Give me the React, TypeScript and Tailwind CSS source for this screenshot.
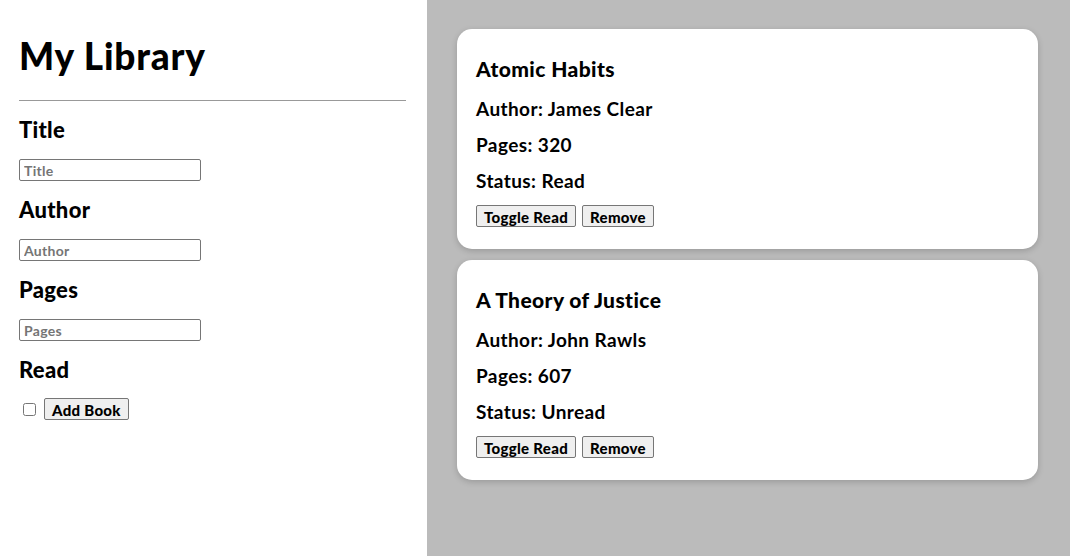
const books = [
  { title: "Atomic Habits", author: "James Clear", pages: 320, read: true },
  { title: "A Theory of Justice", author: "John Rawls", pages: 607, read: false },
];

const fields = ["Title", "Author", "Pages"];

export default function App() {
  return (
    <div className="flex min-h-[556px] font-['Lato',sans-serif] text-black">
      <aside className="w-[427px] shrink-0 bg-white pl-[19px] pr-[21px] pt-[34px]">
        <h1 className="text-[37px] font-black leading-[44px] tracking-[0.8px]">My Library</h1>
        <hr className="mt-[22px] border-t-[1.5px] border-[#999999]" />
        <form className="flex flex-col">
          {fields.map((f) => (
            <div key={f} className="flex flex-col pt-[16px]">
              <label className="text-[22px] font-black leading-[26px] tracking-[0.3px]">{f}</label>
              <input
                placeholder={f}
                className="mt-[16px] h-[22px] w-[182px] rounded-[2px] border border-[#767676] px-[4px] text-[14px] font-bold tracking-[0.3px] placeholder:text-[#757575]"
              />
            </div>
          ))}
          <div className="flex flex-col pt-[16px]">
            <label className="text-[22px] font-black leading-[26px] tracking-[0.3px]">Read</label>
            <div className="mt-[15px] flex items-center gap-[8px] pl-[4px]">
              <input type="checkbox" className="h-[13px] w-[13px]" />
              <button
                type="button"
                className="h-[22px] rounded-[2px] border border-[#767676] bg-[#efefef] px-[7px] text-[15px] font-black tracking-[0.3px]"
              >
                Add Book
              </button>
            </div>
          </div>
        </form>
      </aside>
      <main className="flex flex-1 flex-col gap-[11px] bg-[#bbbbbb] pb-[30px] pl-[30px] pr-[32px] pt-[29px]">
        {books.map((b) => (
          <div
            key={b.title}
            className="flex h-[220px] flex-col rounded-[15px] bg-white px-[19px] pt-[27px] shadow-[0_2px_6px_rgba(0,0,0,0.18)]"
          >
            <h3 className="text-[21px] font-black leading-[26px] tracking-[0.4px]">{b.title}</h3>
            <p className="mt-[16px] text-[19px] font-bold leading-[22px] tracking-[0.4px]">Author: {b.author}</p>
            <p className="mt-[14px] text-[19px] font-bold leading-[22px] tracking-[0.4px]">Pages: {b.pages}</p>
            <p className="mt-[14px] text-[19px] font-bold leading-[22px] tracking-[0.4px]">
              Status: {b.read ? "Read" : "Unread"}
            </p>
            <div className="mt-[13px] flex gap-[6px]">
              <button
                type="button"
                className="h-[22px] rounded-[2px] border border-[#767676] bg-[#efefef] px-[7px] text-[15px] font-black tracking-[0.3px]"
              >
                Toggle Read
              </button>
              <button
                type="button"
                className="h-[22px] rounded-[2px] border border-[#767676] bg-[#efefef] px-[7px] text-[15px] font-black tracking-[0.3px]"
              >
                Remove
              </button>
            </div>
          </div>
        ))}
      </main>
    </div>
  );
}
